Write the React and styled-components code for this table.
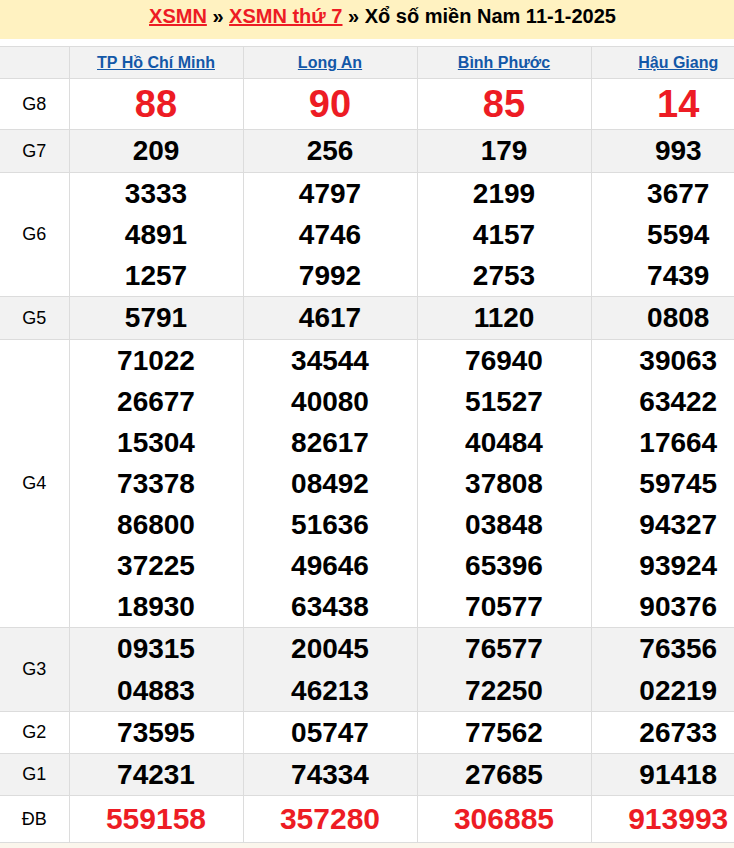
import React from "react";
import styled, { createGlobalStyle } from "styled-components";

const Global = createGlobalStyle`
  html, body { margin: 0; padding: 0; overflow: hidden; background: #fbf6ec; }
  body { font-family: "Liberation Sans", Arial, sans-serif; }
`;

const Wrap = styled.div`
  width: 765px;
  background: #fff;
`;

const Title = styled.h2`
  margin: 0 0 7px;
  height: 39px;
  background: #fff2c1;
  font-size: 20px;
  font-weight: bold;
  line-height: 33px;
  text-align: center;
  color: #000;
`;

const TitleLink = styled.a`
  color: #ed1c24;
  text-decoration: underline;
`;

const Table = styled.table`
  width: 765px;
  border-collapse: collapse;
  table-layout: fixed;
  border-bottom: 1px solid #dcdcdc;
`;

const Row = styled.tr`
  background: ${(p) => (p.$shade ? "#f2f2f2" : "#fff")};
  border-top: 1px solid #dcdcdc;
`;

const HeadCell = styled.th`
  height: 31px;
  padding: 0;
  border-left: 1px solid #dcdcdc;
  &:first-child { border-left: none; }
  font-size: 16px;
  font-weight: bold;
  text-align: center;
`;

const ProvLink = styled.a`
  color: #1358a8;
  text-decoration: underline;
`;

const Label = styled.td`
  padding: 0;
  text-align: center;
  font-size: 18px;
  color: #000;
  vertical-align: middle;
`;

const Cell = styled.td`
  padding: 0;
  border-left: 1px solid #dcdcdc;
  text-align: center;
  vertical-align: middle;
`;

const Num = styled.div`
  font-weight: bold;
  color: ${(p) => (p.$red ? "#ed1c24" : "#000")};
  font-size: ${(p) => p.$size}px;
  line-height: ${(p) => p.$lh}px;
`;

const provinces = ["TP Hồ Chí Minh", "Long An", "Bình Phước", "Hậu Giang"];

const rows = [
  { g: "G8", red: true, size: 38, lh: 50, v: [["88"], ["90"], ["85"], ["14"]] },
  { g: "G7", lh: 42, v: [["209"], ["256"], ["179"], ["993"]] },
  {
    g: "G6",
    lh: 41,
    v: [
      ["3333", "4891", "1257"],
      ["4797", "4746", "7992"],
      ["2199", "4157", "2753"],
      ["3677", "5594", "7439"],
    ],
  },
  { g: "G5", lh: 42, v: [["5791"], ["4617"], ["1120"], ["0808"]] },
  {
    g: "G4",
    lh: 41,
    v: [
      ["71022", "26677", "15304", "73378", "86800", "37225", "18930"],
      ["34544", "40080", "82617", "08492", "51636", "49646", "63438"],
      ["76940", "51527", "40484", "37808", "03848", "65396", "70577"],
      ["39063", "63422", "17664", "59745", "94327", "93924", "90376"],
    ],
  },
  {
    g: "G3",
    lh: 41.5,
    v: [
      ["09315", "04883"],
      ["20045", "46213"],
      ["76577", "72250"],
      ["76356", "02219"],
    ],
  },
  { g: "G2", lh: 41, v: [["73595"], ["05747"], ["77562"], ["26733"]] },
  { g: "G1", lh: 41, v: [["74231"], ["74334"], ["27685"], ["91418"]] },
  { g: "ĐB", red: true, size: 30, lh: 46, v: [["559158"], ["357280"], ["306885"], ["913993"]] },
];

export default function App() {
  return (
    <Wrap>
      <Global />
      <Title>
        <TitleLink href="#">XSMN</TitleLink> » <TitleLink href="#">XSMN thứ 7</TitleLink> » Xổ số miền Nam 11-1-2025
      </Title>
      <Table>
        <colgroup>
          <col style={{ width: 69 }} />
          <col />
          <col />
          <col />
          <col />
        </colgroup>
        <tbody>
          <Row $shade>
            <HeadCell />
            {provinces.map((p) => (
              <HeadCell key={p}>
                <ProvLink href="#">{p}</ProvLink>
              </HeadCell>
            ))}
          </Row>
          {rows.map((r, i) => (
            <Row key={r.g} $shade={i % 2 === 1}>
              <Label>{r.g}</Label>
              {r.v.map((nums, j) => (
                <Cell key={j}>
                  {nums.map((n, k) => (
                    <Num key={k} $red={r.red} $size={r.size || 28} $lh={r.lh}>
                      {n}
                    </Num>
                  ))}
                </Cell>
              ))}
            </Row>
          ))}
        </tbody>
      </Table>
    </Wrap>
  );
}
